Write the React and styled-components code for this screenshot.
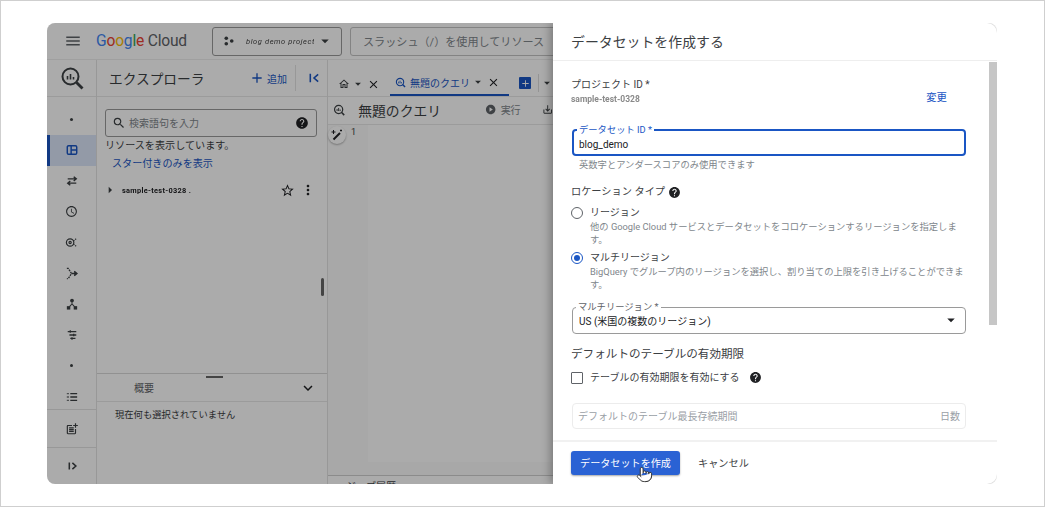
import React from "react";
import styled, { createGlobalStyle } from "styled-components";
import {
  MdMenu,
  MdAdd,
  MdSearch,
  MdHelp,
  MdStarBorder,
  MdMoreVert,
  MdArrowRight,
  MdOutlineHome,
  MdClose,
  MdArrowDropDown,
  MdPlayCircle,
  MdOutlineSaveAlt,
  MdOutlineSchedule,
  MdOutlinePostAdd,
  MdExpandMore,
} from "react-icons/md";
import { Pointer } from "lucide-react";

const GlobalStyle = createGlobalStyle`
  html, body { margin: 0; padding: 0; background: #fff; }
  body { font-family: Roboto, "Noto Sans CJK JP", sans-serif; color: #3c4043; }
  * { box-sizing: border-box; }
`;

const blue = "#1a56c4";

const Page = styled.div`
  width: 1045px;
  height: 507px;
  border: 1px solid #cfcfcf;
  padding: 22px 47px 22px 46px;
  overflow: hidden;
`;

const Window = styled.div`
  display: flex;
  width: 950px;
  height: 461px;
  border-radius: 8px;
  overflow: hidden;
  background: #eeeeee;
`;

/* left part, everything behind the side panel */
const Console = styled.div`
  position: relative;
  width: 506px;
  flex: none;
  display: flex;
  flex-direction: column;
  overflow: hidden;
  background: #fff;
`;

const Scrim = styled.div`
  position: absolute;
  inset: 0;
  background: rgba(0, 0, 0, 0.33);
`;

const TopBar = styled.header`
  height: 37px;
  flex: none;
  display: flex;
  align-items: center;
  padding-left: 17px;
  border-bottom: 1px solid #eee;
`;

const MenuIcon = styled(MdMenu)`
  flex: none;
  color: #5f6368;
`;

const Logo = styled.div`
  width: 90px;
  flex: none;
  margin-left: 14px;
  margin-right: 26px;
  font-size: 15.6px;
  letter-spacing: -0.2px;
  white-space: nowrap;
  color: #5f6368;
`;

const LogoLetter = styled.span`
  color: ${(p) => p.$c};
`;

const ProjectPicker = styled.div`
  width: 130px;
  height: 29px;
  flex: none;
  display: flex;
  align-items: center;
  padding-left: 11px;
  border: 1px solid #9a9a9a;
  border-radius: 3px;
`;

const MaskedName = styled.span`
  width: 68px;
  flex: none;
  margin: 0 2px 0 12px;
  font-size: 7.5px;
  font-style: italic;
  letter-spacing: 0.6px;
  white-space: nowrap;
  overflow: hidden;
  color: #444;
  filter: blur(0.6px);
`;

const PickerCaret = styled(MdArrowDropDown)`
  flex: none;
  color: #3c4043;
`;

const SearchBar = styled.div`
  width: 300px;
  height: 29px;
  flex: none;
  display: flex;
  align-items: center;
  margin-left: 8px;
  padding-left: 12px;
  border: 1px solid #c4c4c4;
  border-radius: 3px;
  font-size: 11.1px;
  white-space: nowrap;
  color: #80868b;
`;

const Main = styled.div`
  flex: 1;
  display: flex;
  min-height: 0;
`;

const Rail = styled.nav`
  width: 50px;
  flex: none;
  display: flex;
  flex-direction: column;
  border-right: 1px solid #e3e3e3;
`;

const RailHead = styled.div`
  height: 37px;
  flex: none;
  display: flex;
  align-items: center;
  justify-content: center;
  border-bottom: 1px solid #e8e8e8;
`;

const RailList = styled.div`
  height: 312px;
  flex: none;
  padding-top: 7px;
  overflow: hidden;
`;

const RailItem = styled.div`
  height: 30.8px;
  display: flex;
  align-items: center;
  justify-content: center;
  color: #3c4043;
  ${(p) =>
    p.$active &&
    `
    background: #dbe6fa;
    box-shadow: inset 3px 0 0 ${blue};
    color: ${blue};
  `}
`;

const RailFoot = styled.div`
  height: ${(p) => p.$h}px;
  flex: none;
  display: flex;
  align-items: center;
  justify-content: center;
  border-top: 1px solid #e3e3e3;
  color: #3c4043;
`;

const Dot = styled.span`
  width: 3px;
  height: 3px;
  border-radius: 50%;
  background: #3c4043;
`;

const Explorer = styled.section`
  width: 231px;
  flex: none;
  display: flex;
  flex-direction: column;
  border-right: 1px solid #e3e3e3;
`;

const ExplorerHead = styled.div`
  height: 37px;
  flex: none;
  display: flex;
  align-items: center;
  padding-left: 12px;
  border-bottom: 1px solid #e8e8e8;
`;

const ExplorerTitle = styled.h2`
  width: 140px;
  margin: 0;
  font-size: 13.7px;
  font-weight: 400;
  color: #3c4043;
`;

const AddButton = styled.div`
  display: flex;
  align-items: center;
  gap: 2px;
  font-size: 10px;
  color: ${blue};
`;

const HeadDivider = styled.span`
  width: 1px;
  height: 26px;
  margin: 0 12px 0 8px;
  background: #e3e3e3;
`;

const CollapseMark = styled.span`
  display: flex;
  color: ${blue};
`;

const Tree = styled.div`
  position: relative;
  flex: 1;
  min-height: 0;
  padding: 12px 10px 0 8px;
`;

const TreeSearch = styled.div`
  width: 212px;
  height: 28px;
  display: flex;
  align-items: center;
  gap: 3px;
  padding: 0 7px 0 6px;
  border: 1px solid #9a9a9a;
  border-radius: 3px;
  font-size: 10px;
  color: #80868b;
`;

const SearchText = styled.span`
  flex: 1;
  padding-bottom: 2px;
`;

const TreeNote = styled.div`
  margin-top: 2px;
  font-size: 10.1px;
  line-height: 14px;
  color: #3c4043;
`;

const TreeLink = styled.div`
  margin: 4px 0 0 7px;
  font-size: 10.1px;
  line-height: 14px;
  color: ${blue};
`;

const TreeRow = styled.div`
  height: 20px;
  display: flex;
  align-items: center;
  margin: 9px 0 0 -3px;
  color: #202124;
`;

const RowName = styled.span`
  flex: 1;
  margin-left: 4px;
  font-size: 7.4px;
  font-weight: 700;
  letter-spacing: 0.3px;
  white-space: nowrap;
  filter: blur(0.6px);
`;

const RowMenu = styled(MdMoreVert)`
  margin: 0 1px 0 5px;
`;

const TreeThumb = styled.span`
  position: absolute;
  right: 3px;
  top: 181px;
  width: 3px;
  height: 18px;
  border-radius: 2px;
  background: #666;
`;

const Details = styled.div`
  position: relative;
  height: 111px;
  flex: none;
  border-top: 1px solid #d8d8d8;
`;

const DragHandle = styled.span`
  position: absolute;
  left: 109px;
  top: 2px;
  width: 17px;
  height: 2px;
  background: #666;
`;

const DetailsHead = styled.div`
  height: 28px;
  display: flex;
  align-items: center;
  justify-content: space-between;
  padding: 0 10px 0 37px;
  border-bottom: 1px solid #e8e8e8;
  font-size: 10px;
  color: #5f6368;
`;

const DetailsText = styled.div`
  padding: 6px 0 0 18px;
  font-size: 9.3px;
  line-height: 14px;
  color: #3c4043;
`;

const Editor = styled.section`
  flex: 1;
  min-width: 0;
  display: flex;
  flex-direction: column;
`;

const TabRow = styled.div`
  height: 37px;
  flex: none;
  display: flex;
  align-items: stretch;
  padding-left: 10px;
  border-bottom: 1px solid #e8e8e8;
  white-space: nowrap;
`;

const Tab = styled.div`
  width: ${(p) => p.$w}px;
  flex: none;
  display: flex;
  align-items: center;
  padding-top: ${(p) => (p.$active ? 10 : 12)}px;
  padding-left: ${(p) => p.$pad}px;
  font-size: 10px;
  color: ${(p) => (p.$active ? blue : "#3c4043")};
  border-bottom: ${(p) => (p.$active ? `2px solid ${blue}` : "0")};
`;

const TabLabel = styled.span`
  width: 60px;
  margin-left: 4px;
`;

const TabCaret = styled(MdArrowDropDown)`
  margin-left: 1px;
  color: #3c4043;
`;

const TabClose = styled(MdClose)`
  margin-left: 2px;
  color: #202124;
`;

const NewTab = styled.span`
  width: 12px;
  height: 12px;
  flex: none;
  align-self: center;
  margin: 10px 7px 0 10px;
  border-radius: 1px;
  background: ${blue};
  color: #fff;
  display: flex;
  align-items: center;
  justify-content: center;
`;

const TabDivider = styled.span`
  width: 1px;
  height: 18px;
  flex: none;
  align-self: center;
  margin: 10px 0 0 0;
  background: #ddd;
`;

const TabMenuCaret = styled(MdArrowDropDown)`
  align-self: center;
  margin: 10px 0 0 1px;
  flex: none;
`;

const QueryBar = styled.div`
  height: 28px;
  flex: none;
  display: flex;
  align-items: center;
  padding: 0 0 2px 5px;
  border-bottom: 1px solid #e8e8e8;
  white-space: nowrap;
`;

const QueryTitle = styled.h3`
  width: 83px;
  flex: none;
  margin: 0 44px 0 13px;
  font-size: 13.8px;
  font-weight: 400;
  color: #3c4043;
`;

const RunLabel = styled.span`
  width: 20px;
  flex: none;
  margin: 0 21px 0 4px;
  font-size: 10px;
  color: #80868b;
`;

const EditorBody = styled.div`
  flex: 1;
  min-height: 0;
  display: flex;
  background: #fbfbfb;
`;

const Gutter = styled.div`
  width: 40px;
  flex: none;
  display: flex;
  align-items: flex-start;
  padding-top: 1px;
  font-size: 9px;
  color: #3c4043;
`;

const Fab = styled.span`
  width: 18px;
  height: 18px;
  flex: none;
  display: flex;
  align-items: center;
  justify-content: center;
  margin-right: 5px;
  border-radius: 50%;
  background: #fff;
  box-shadow: 0 1px 2px rgba(0, 0, 0, 0.3);
`;

const LineNumber = styled.span`
  margin-top: 1px;
`;

const CodeArea = styled.div`
  flex: 1;
  margin-bottom: 13px;
  background: #fff;
`;

const BottomTabs = styled.div`
  height: 9px;
  flex: none;
  padding: 5px 0 0 18px;
  border-top: 1px solid #d0d0d0;
  font-size: 10px;
  line-height: 12px;
  overflow: hidden;
  color: #3c4043;
`;

/* create dataset panel */
const Panel = styled.aside`
  position: relative;
  width: 444px;
  flex: none;
  display: flex;
  flex-direction: column;
  background: #fff;
  border-radius: 0 10px 10px 0;
  box-shadow: -3px 0 8px rgba(0, 0, 0, 0.28);
`;

const PanelHead = styled.div`
  height: 38px;
  flex: none;
  display: flex;
  align-items: center;
  padding: 0 0 2px 18px;
  border-bottom: 1px solid #eee;
`;

const PanelTitle = styled.h1`
  margin: 0;
  font-size: 13.9px;
  font-weight: 400;
  color: #3c4043;
`;

const PanelBody = styled.div`
  flex: 1;
  min-height: 0;
  display: flex;
`;

const Form = styled.div`
  flex: 1;
  min-width: 0;
  padding: 17px 23px 0 18px;
  overflow: hidden;
`;

const ScrollTrack = styled.div`
  width: 8px;
  flex: none;
  padding-top: 1px;
`;

const ScrollThumb = styled.div`
  height: 263px;
  background: #c6c6c6;
`;

const ProjectRow = styled.div`
  display: flex;
  align-items: flex-end;
  justify-content: space-between;
  padding-right: 19px;
`;

const FieldLabel = styled.div`
  font-size: 10px;
  line-height: 14px;
  color: #3c4043;
`;

const ProjectId = styled.div`
  font-size: 8.5px;
  line-height: 15px;
  font-weight: 700;
  color: #8a8a8a;
  filter: blur(0.7px);
`;

const ChangeLink = styled.span`
  margin-bottom: 2px;
  font-size: 10.4px;
  line-height: 14px;
  color: ${blue};
`;

const OutlinedField = styled.div`
  position: relative;
  width: 394px;
  height: ${(p) => p.$h}px;
  display: flex;
  align-items: center;
  justify-content: space-between;
  margin: ${(p) => p.$mt}px 0 0 1px;
  padding: ${(p) => p.$pad};
  border: ${(p) => p.$border};
  border-radius: 4px;
  font-size: 10px;
  color: #202124;
`;

const Legend = styled.span`
  position: absolute;
  left: 3px;
  top: -7px;
  padding: 0 2px;
  background: #fff;
  font-size: 9.3px;
  line-height: 11px;
  color: ${(p) => p.$c};
`;

const SelectCaret = styled(MdArrowDropDown)`
  margin-right: -4px;
  color: #202124;
`;

const Hint = styled.div`
  margin: 2px 0 0 8px;
  font-size: 9.3px;
  line-height: 14px;
  color: #80868b;
`;

const SectionLabel = styled.div`
  display: flex;
  align-items: center;
  gap: 3px;
  margin-top: 13px;
  font-size: 10.2px;
  line-height: 14px;
  color: #3c4043;
`;

const Choice = styled.div`
  display: grid;
  grid-template-columns: 12px 1fr;
  column-gap: 7px;
  align-items: center;
  margin-top: ${(p) => p.$mt}px;
`;

const Radio = styled.span`
  width: 12px;
  height: 12px;
  display: flex;
  align-items: center;
  justify-content: center;
  border-radius: 50%;
  border: 1.4px solid ${(p) => (p.$on ? blue : "#5f6368")};
  &::after {
    content: "";
    width: 6px;
    height: 6px;
    border-radius: 50%;
    background: ${(p) => (p.$on ? blue : "transparent")};
  }
`;

const ChoiceLabel = styled.span`
  font-size: 10px;
  line-height: 14px;
  color: #3c4043;
`;

const ChoiceHelp = styled.p`
  grid-column: 2;
  margin: 1px 0 0;
  font-size: 9.3px;
  line-height: 12.7px;
  color: #80868b;
`;

const ExpiryTitle = styled.h4`
  margin: 12px 0 0;
  font-size: 11.6px;
  line-height: 16px;
  font-weight: 400;
  color: #3c4043;
`;

const CheckRow = styled.div`
  display: flex;
  align-items: center;
  margin-top: 9px;
  font-size: 10px;
  line-height: 14px;
  color: #3c4043;
`;

const CheckBox = styled.span`
  width: 12px;
  height: 12px;
  flex: none;
  margin-right: 7px;
  border: 1.4px solid #5f6368;
  border-radius: 1px;
`;

const CheckHelp = styled.span`
  display: flex;
  margin-left: 9px;
  color: #202124;
`;

const Placeholder = styled.span`
  color: #9aa0a6;
`;

const PanelFoot = styled.div`
  height: 44px;
  flex: none;
  display: flex;
  align-items: flex-start;
  padding: 9px 0 0 18px;
  border-top: 2px solid #f1f1f1;
`;

const PrimaryButton = styled.div`
  position: relative;
  width: 109px;
  height: 24px;
  display: flex;
  align-items: center;
  justify-content: center;
  padding-bottom: 2px;
  border-radius: 3px;
  background: #2a62d4;
  box-shadow: 0 1px 2px rgba(0, 0, 0, 0.35);
  font-size: 10.1px;
  color: #fff;
`;

const HandCursor = styled.span`
  position: absolute;
  left: 65px;
  top: 15px;
  display: flex;
  color: #333;
`;

const CancelButton = styled.div`
  height: 24px;
  display: flex;
  align-items: center;
  margin-left: 18px;
  padding-bottom: 2px;
  font-size: 10.2px;
  color: #3c4043;
`;

const BigQueryLogo = () => (
  <svg width="24" height="24" viewBox="0 0 24 24" fill="none" stroke="#3c4043">
    <circle cx="10.5" cy="10.5" r="8" strokeWidth="2" />
    <path d="M16.5 16.5l6 6" strokeWidth="2.8" />
    <path d="M7.5 10v3.5M10.5 8v5.5M13.5 11v2.5" strokeWidth="1.6" />
  </svg>
);

const SmallQueryIcon = ({ color = "#3c4043", size = 14 }) => (
  <svg width={size} height={size} viewBox="0 0 24 24" fill="none" stroke={color}>
    <circle cx="11" cy="11" r="8" strokeWidth="2.4" />
    <path d="M16.5 16.5l5.5 5.5" strokeWidth="3" />
    <path d="M8 10v4M11 8v6M14 11v3" strokeWidth="1.8" />
  </svg>
);

const PanelsIcon = () => (
  <svg width="12" height="12" viewBox="0 0 14 14" fill="none" stroke="currentColor" strokeWidth="1.7">
    <rect x="1.5" y="2" width="11" height="10" rx="1.5" />
    <path d="M6 2v10M6 7h6.5" />
  </svg>
);

const TransferIcon = () => (
  <svg width="12" height="12" viewBox="0 0 14 14" fill="none" stroke="currentColor" strokeWidth="1.6">
    <path d="M2 4.5h9.5M9 2l3 2.5L9 7" />
    <path d="M12 9.5H2.5M5 7l-3 2.5L5 12" />
  </svg>
);

const TargetIcon = () => (
  <svg width="13" height="13" viewBox="0 0 14 14" fill="none" stroke="currentColor" strokeWidth="1.3">
    <circle cx="5.5" cy="7" r="4" />
    <circle cx="5.5" cy="7" r="1.2" />
    <path d="M9 5.5l3-2.5M9 8.5l3 2.5" strokeDasharray="1.5 1" />
  </svg>
);

const PipelineIcon = () => (
  <svg width="13" height="13" viewBox="0 0 14 14" fill="none" stroke="currentColor" strokeWidth="1.4">
    <path d="M2 1.5h1.5L7 7l-3.5 5.5H2" strokeDasharray="2 1" />
    <path d="M7 7h5.5M10 4.5L13 7l-3 2.5" fill="currentColor" />
  </svg>
);

const TreeNodesIcon = () => (
  <svg width="12" height="12" viewBox="0 0 14 14" fill="currentColor">
    <circle cx="7" cy="3" r="2.2" />
    <rect x="1" y="9.5" width="4" height="4" />
    <rect x="9" y="9.5" width="4" height="4" />
    <path d="M7 5v3M4 10l3-3 3 3" fill="none" stroke="currentColor" strokeWidth="1.2" />
  </svg>
);

const LinesIcon = () => (
  <svg width="12" height="12" viewBox="0 0 14 14" fill="none" stroke="currentColor" strokeWidth="1.5">
    <path d="M2 3h10M4 7h8M5 11h6M5 1.5v3M9 5.5v3M7 9.5v3" />
  </svg>
);

const ListIcon = () => (
  <svg width="12" height="12" viewBox="0 0 14 14" fill="none" stroke="currentColor" strokeWidth="1.6">
    <path d="M5 3h8M5 7h8M5 11h8" />
    <path d="M1 3h2.5M1 7h2.5M1 11h2.5" strokeDasharray="1 .7" />
  </svg>
);

const CollapseIcon = () => (
  <svg width="12" height="12" viewBox="0 0 13 13" fill="none" stroke="currentColor" strokeWidth="1.7">
    <path d="M2.5 2v9M11 2.5L6.5 6.5 11 10.5" />
  </svg>
);

const ExpandIcon = () => (
  <svg width="10" height="10" viewBox="0 0 13 13" fill="none" stroke="currentColor" strokeWidth="2">
    <path d="M3 2v9M7 2.5l4.5 4-4.5 4" />
  </svg>
);

const WandIcon = () => (
  <svg width="12" height="12" viewBox="0 0 12 12" fill="none" stroke="#202124">
    <path d="M2.5 10.5L9 4" strokeWidth="2" />
    <path d="M2.5 1v4M.5 3h4M10 .5v2M9 1.5h2" strokeWidth="1" />
  </svg>
);

const railIcons = [
  <Dot />,
  <PanelsIcon />,
  <TransferIcon />,
  <MdOutlineSchedule size={13} />,
  <TargetIcon />,
  <PipelineIcon />,
  <TreeNodesIcon />,
  <LinesIcon />,
  <Dot />,
  <ListIcon />,
];

function ConsoleBehind() {
  return (
    <Console>
      <TopBar>
        <MenuIcon size={18} />
        <Logo>
          <LogoLetter $c="#4285f4">G</LogoLetter>
          <LogoLetter $c="#ea4335">o</LogoLetter>
          <LogoLetter $c="#fbbc04">o</LogoLetter>
          <LogoLetter $c="#4285f4">g</LogoLetter>
          <LogoLetter $c="#34a853">l</LogoLetter>
          <LogoLetter $c="#ea4335">e</LogoLetter> Cloud
        </Logo>
        <ProjectPicker>
          <svg width="10" height="10" viewBox="0 0 11 11" fill="#3c4043">
            <circle cx="2.5" cy="2.5" r="2" />
            <circle cx="2.5" cy="8.5" r="2" />
            <circle cx="8.5" cy="5.5" r="2" />
          </svg>
          <MaskedName>blog demo project</MaskedName>
          <PickerCaret size={18} />
        </ProjectPicker>
        <SearchBar>スラッシュ（/）を使用してリソース</SearchBar>
      </TopBar>
      <Main>
        <Rail>
          <RailHead>
            <BigQueryLogo />
          </RailHead>
          <RailList>
            {railIcons.map((icon, i) => (
              <RailItem key={i} $active={i === 1}>
                {icon}
              </RailItem>
            ))}
          </RailList>
          <RailFoot $h={38}>
            <MdOutlinePostAdd size={14} />
          </RailFoot>
          <RailFoot $h={37}>
            <ExpandIcon />
          </RailFoot>
        </Rail>
        <Explorer>
          <ExplorerHead>
            <ExplorerTitle>エクスプローラ</ExplorerTitle>
            <AddButton>
              <MdAdd size={16} />
              追加
            </AddButton>
            <HeadDivider />
            <CollapseMark>
              <CollapseIcon />
            </CollapseMark>
          </ExplorerHead>
          <Tree>
            <TreeSearch>
              <MdSearch size={14} color="#3c4043" />
              <SearchText>検索語句を入力</SearchText>
              <MdHelp size={14} color="#202124" />
            </TreeSearch>
            <TreeNote>リソースを表示しています。</TreeNote>
            <TreeLink>スター付きのみを表示</TreeLink>
            <TreeRow>
              <MdArrowRight size={16} color="#3c4043" />
              <RowName>sample-test-0328 .</RowName>
              <MdStarBorder size={15} />
              <RowMenu size={16} />
            </TreeRow>
            <TreeThumb />
          </Tree>
          <Details>
            <DragHandle />
            <DetailsHead>
              概要
              <MdExpandMore size={18} color="#202124" />
            </DetailsHead>
            <DetailsText>現在何も選択されていません</DetailsText>
          </Details>
        </Explorer>
        <Editor>
          <TabRow>
            <Tab $w={52} $pad={0}>
              <MdOutlineHome size={12} />
              <TabCaret size={14} />
              <TabClose size={13} />
            </Tab>
            <Tab $w={119} $pad={5} $active>
              <SmallQueryIcon color={blue} size={11} />
              <TabLabel>無題のクエリ</TabLabel>
              <TabCaret size={14} />
              <TabClose size={13} />
            </Tab>
            <NewTab>
              <MdAdd size={11} />
            </NewTab>
            <TabDivider />
            <TabMenuCaret size={14} />
          </TabRow>
          <QueryBar>
            <SmallQueryIcon />
            <QueryTitle>無題のクエリ</QueryTitle>
            <MdPlayCircle size={13} color="#5f6368" />
            <RunLabel>実行</RunLabel>
            <MdOutlineSaveAlt size={13} />
          </QueryBar>
          <EditorBody>
            <Gutter>
              <Fab>
                <WandIcon />
              </Fab>
              <LineNumber>1</LineNumber>
            </Gutter>
            <CodeArea />
          </EditorBody>
          <BottomTabs>ジョブ履歴</BottomTabs>
        </Editor>
      </Main>
      <Scrim />
    </Console>
  );
}

function CreateDatasetPanel() {
  return (
    <Panel>
      <PanelHead>
        <PanelTitle>データセットを作成する</PanelTitle>
      </PanelHead>
      <PanelBody>
        <Form>
          <ProjectRow>
            <div>
              <FieldLabel>プロジェクト ID *</FieldLabel>
              <ProjectId>sample-test-0328</ProjectId>
            </div>
            <ChangeLink>変更</ChangeLink>
          </ProjectRow>

          <OutlinedField $h={27} $mt={22} $border={`2px solid ${blue}`} $pad="3px 9px 0 5px">
            <Legend $c={blue}>データセット ID *</Legend>
            blog_demo
          </OutlinedField>
          <Hint>英数字とアンダースコアのみ使用できます</Hint>

          <SectionLabel>
            ロケーション タイプ
            <MdHelp size={13} color="#202124" />
          </SectionLabel>

          <Choice $mt={7}>
            <Radio />
            <ChoiceLabel>リージョン</ChoiceLabel>
            <ChoiceHelp>他の Google Cloud サービスとデータセットをコロケーションするリージョンを指定します。</ChoiceHelp>
          </Choice>
          <Choice $mt={5}>
            <Radio $on />
            <ChoiceLabel>マルチリージョン</ChoiceLabel>
            <ChoiceHelp>BigQuery でグループ内のリージョンを選択し、割り当ての上限を引き上げることができます。</ChoiceHelp>
          </Choice>

          <OutlinedField $h={27} $mt={15} $border="1px solid #9a9a9a" $pad="0 9px 0 6px">
            <Legend $c="#5f6368">マルチリージョン *</Legend>
            US (米国の複数のリージョン)
            <SelectCaret size={18} />
          </OutlinedField>

          <ExpiryTitle>デフォルトのテーブルの有効期限</ExpiryTitle>
          <CheckRow>
            <CheckBox />
            テーブルの有効期限を有効にする
            <CheckHelp>
              <MdHelp size={13} />
            </CheckHelp>
          </CheckRow>

          <OutlinedField $h={26} $mt={18} $border="1px solid #ececec" $pad="0 5px 0 5px">
            <Placeholder>デフォルトのテーブル最長存続期間</Placeholder>
            <Placeholder>日数</Placeholder>
          </OutlinedField>
        </Form>
        <ScrollTrack>
          <ScrollThumb />
        </ScrollTrack>
      </PanelBody>
      <PanelFoot>
        <PrimaryButton>
          データセットを作成
          <HandCursor>
            <Pointer size={17} strokeWidth={1.4} fill="#fff" />
          </HandCursor>
        </PrimaryButton>
        <CancelButton>キャンセル</CancelButton>
      </PanelFoot>
    </Panel>
  );
}

export default function App() {
  return (
    <Page>
      <GlobalStyle />
      <Window>
        <ConsoleBehind />
        <CreateDatasetPanel />
      </Window>
    </Page>
  );
}
